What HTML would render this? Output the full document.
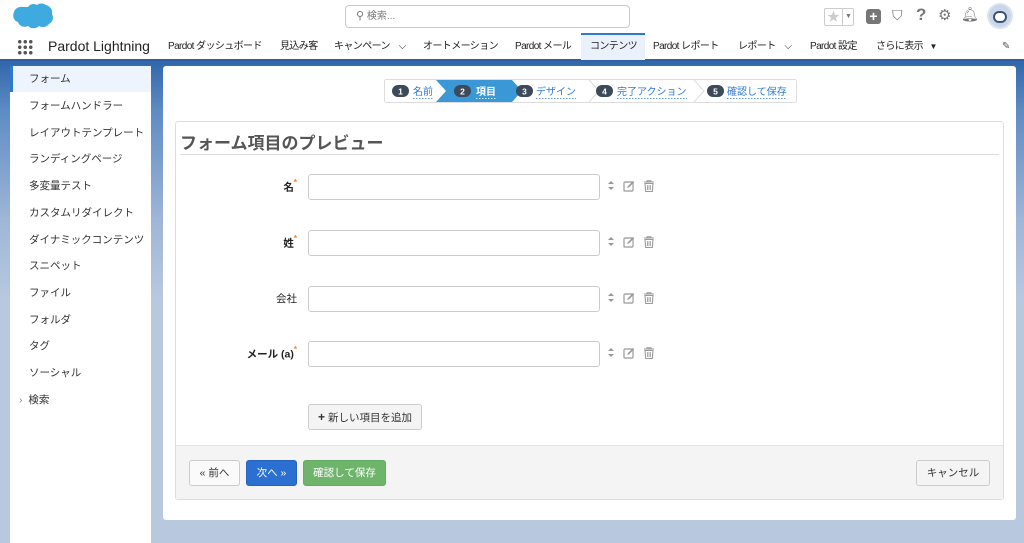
<!DOCTYPE html>
<html><head><meta charset="utf-8"><style>
*{box-sizing:border-box;margin:0;padding:0}
body{width:1024px;height:543px;overflow:hidden;font-family:"Liberation Sans","Noto Sans CJK JP",sans-serif;background:linear-gradient(#2f66ab 60px,#5d8bc3 110px,#9fb6d7 220px,#b8c8df 300px);position:relative;color:#333}
.abs{position:absolute}
#hdr{left:0;top:0;width:1024px;height:61px;background:#fff;border-bottom:2px solid #2f5f9e}
.nav{top:34px;height:26px;font-size:10px;letter-spacing:-0.6px;line-height:26px;color:#222;white-space:nowrap}
#side{left:10px;top:66px;width:141px;height:477px;background:#fff}
.si{position:absolute;left:0;width:141px;height:26px;line-height:26px;font-size:10.5px;padding-left:19px;color:#333}
#main{left:163px;top:66px;width:853px;height:454px;background:#fff;border-radius:3px}
.lbl{position:absolute;right:727px;font-size:10.5px;font-weight:bold;color:#222;text-align:right}
.lbl sup{color:#e8832b;font-size:8px;position:relative;top:-1px}
.inp{position:absolute;left:308px;width:292px;height:26px;border:1px solid #ccc;border-radius:3px;background:#fff}
.btn{position:absolute;height:26px;border-radius:3px;font-size:10.5px;line-height:24px;text-align:center;border:1px solid #ccc;background:#f4f4f4;color:#333}
</style></head><body>
<div id="hdr" class="abs">
 <svg class="abs" style="left:10px;top:3px" width="44" height="30" viewBox="0 0 44 30"><path d="M18 4c2-3 6-4 9-2 2-2 6-2 9 0 4 1 7 5 6 9 2 3 1 8-3 10-2 3-7 4-10 2-3 3-8 3-11 0-4 2-9 0-10-4-4-1-6-6-4-10 1-4 6-6 10-5z" fill="#1d9bd9" opacity=".85"/></svg>
 <div class="abs" style="left:345px;top:5px;width:285px;height:23px;border:1px solid #c9c9c9;border-radius:4px;font-size:10px;line-height:21px;color:#777;padding-left:10px"><span style="font-size:11px">&#9906;</span> 検索...</div>
 <div class="abs" style="left:824px;top:8px;width:30px;height:18px;border:1px solid #ccc;border-radius:2px;color:#ccc;font-size:13px;line-height:16px;padding-left:2px">★<span style="position:absolute;left:17px;top:0;width:12px;height:16px;border-left:1px solid #ccc;color:#777;font-size:7px;text-align:center">▼</span></div>
 <div class="abs" style="left:866px;top:9px;width:15px;height:15px;background:#777;border-radius:3px;color:#fff;font-size:14px;line-height:15px;text-align:center;font-weight:bold">+</div>
 <div class="abs" style="left:892px;top:7px;color:#777;font-size:14px">⛉</div>
 <div class="abs" style="left:916px;top:5px;color:#777;font-size:17px;font-weight:bold">?</div>
 <div class="abs" style="left:938px;top:6px;color:#777;font-size:15px">⚙</div>
 <div class="abs" style="left:961px;top:6px;color:#777;font-size:14px">🔔︎</div>
 <div class="abs" style="left:987px;top:3px;width:26px;height:26px;border-radius:50%;background:#c9d6e8;border:2px solid #dde4ee"><div style="margin:6px auto 0;width:14px;height:12px;background:#fff;border-radius:6px;border:2px solid #3a5478"></div></div>
 <div class="abs" style="left:17px;top:39px;width:16px;height:16px;background:radial-gradient(circle,#555 1.6px,transparent 2px) 0 0/5.5px 5.5px"></div>
 <div class="abs" style="left:48px;top:38px;font-size:14px;color:#222">Pardot Lightning</div>
 <div class="abs" style="left:581px;top:33px;width:64px;height:27px;background:#eaf1fb;border-top:2px solid #2f79d3"></div>
 <div class="abs nav" style="left:168px">Pardot ダッシュボード</div>
 <div class="abs nav" style="left:280px">見込み客</div>
 <div class="abs nav" style="left:334px">キャンペーン&nbsp;&nbsp;&nbsp;&nbsp;⌵</div>
 <div class="abs nav" style="left:423px">オートメーション</div>
 <div class="abs nav" style="left:515px">Pardot メール</div>
 <div class="abs nav" style="left:590px">コンテンツ</div>
 <div class="abs nav" style="left:653px">Pardot レポート</div>
 <div class="abs nav" style="left:738px">レポート&nbsp;&nbsp;&nbsp;&nbsp;⌵</div>
 <div class="abs nav" style="left:810px">Pardot 設定</div>
 <div class="abs nav" style="left:876px">さらに表示&nbsp;&nbsp;&nbsp;<span style="font-size:8px">▼</span></div>
 <div class="abs nav" style="left:1002px;color:#555">✎</div>
</div>
<div id="side" class="abs">
 <div class="si" style="top:0;background:#eef4fd;border-left:3px solid #2f79d3;padding-left:16px">フォーム</div>
 <div class="si" style="top:27px">フォームハンドラー</div>
 <div class="si" style="top:54px">レイアウトテンプレート</div>
 <div class="si" style="top:80px">ランディングページ</div>
 <div class="si" style="top:107px">多変量テスト</div>
 <div class="si" style="top:134px">カスタムリダイレクト</div>
 <div class="si" style="top:161px">ダイナミックコンテンツ</div>
 <div class="si" style="top:187px">スニペット</div>
 <div class="si" style="top:214px">ファイル</div>
 <div class="si" style="top:241px">フォルダ</div>
 <div class="si" style="top:267px">タグ</div>
 <div class="si" style="top:294px">ソーシャル</div>
 <div class="si" style="top:321px;padding-left:9px"><span style="color:#888">›</span>&nbsp; 検索</div>
</div>
<div id="main" class="abs"></div>
<svg class="abs" style="left:384px;top:79px" width="413" height="24" viewBox="0 0 413 24">
 <rect x=".5" y=".5" width="412" height="23" rx="2" fill="#fff" stroke="#ddd"/>
 <polygon points="52,1 128,1 138,12 128,23 52,23 62,12" fill="#3a98d6"/>
 <polyline points="205,1 215,12 205,23" fill="none" stroke="#ddd"/>
 <polyline points="310,1 320,12 310,23" fill="none" stroke="#ddd"/>
 <g font-size="10" font-family="Liberation Sans,Noto Sans CJK JP,sans-serif">
 <rect x="8" y="6" width="17" height="12" rx="6" fill="#3d4a5a"/><text x="16.5" y="15.5" fill="#fff" text-anchor="middle" font-size="8.5" font-weight="bold">1</text><text x="29" y="16" fill="#2f79d3">名前</text>
 <rect x="70" y="6" width="17" height="12" rx="6" fill="#3d4a5a"/><text x="78.5" y="15.5" fill="#fff" text-anchor="middle" font-size="8.5" font-weight="bold">2</text><text x="92" y="16" fill="#fff" font-weight="bold">項目</text>
 <rect x="132" y="6" width="17" height="12" rx="6" fill="#3d4a5a"/><text x="140.5" y="15.5" fill="#fff" text-anchor="middle" font-size="8.5" font-weight="bold">3</text><text x="152" y="16" fill="#2f79d3">デザイン</text>
 <rect x="212" y="6" width="17" height="12" rx="6" fill="#3d4a5a"/><text x="220.5" y="15.5" fill="#fff" text-anchor="middle" font-size="8.5" font-weight="bold">4</text><text x="233" y="16" fill="#2f79d3">完了アクション</text>
 <rect x="323" y="6" width="17" height="12" rx="6" fill="#3d4a5a"/><text x="331.5" y="15.5" fill="#fff" text-anchor="middle" font-size="8.5" font-weight="bold">5</text><text x="343" y="16" fill="#2f79d3">確認して保存</text>
 </g>
 <g stroke="#2f79d3" stroke-dasharray="1.5 1.5" stroke-width=".8"><line x1="29" y1="19.5" x2="49" y2="19.5"/><line x1="152" y1="19.5" x2="192" y2="19.5"/><line x1="233" y1="19.5" x2="303" y2="19.5"/><line x1="343" y1="19.5" x2="403" y2="19.5"/></g>
 <line x1="92" y1="19.5" x2="112" y2="19.5" stroke="#fff" stroke-dasharray="1.5 1.5" stroke-width=".8"/>
</svg>
<div class="abs" style="left:175px;top:121px;width:829px;height:379px;border:1px solid #ddd;border-radius:3px;background:#fff"></div>
<div class="abs" style="left:180px;top:129px;font-size:17px;font-weight:bold;color:#555">フォーム項目のプレビュー</div>
<div class="abs" style="left:180px;top:154px;width:819px;height:1px;background:#ddd"></div>
<div class="abs" style="left:176px;top:445px;width:827px;height:54px;background:#f4f4f4;border-top:1px solid #e4e4e4"></div>

<div class="lbl" style="top:179px">名<sup>*</sup></div>
<div class="lbl" style="top:235px">姓<sup>*</sup></div>
<div class="lbl" style="top:291px;font-weight:normal">会社</div>
<div class="lbl" style="top:346px">メール (a)<sup>*</sup></div>
<div class="inp" style="top:174px"></div>
<div class="inp" style="top:230px"></div>
<div class="inp" style="top:286px"></div>
<div class="inp" style="top:341px"></div>
<svg width="0" height="0" style="position:absolute"><defs><g id="ic"><path d="M3 3l3-3 3 3zM3 6l3 3 3-3z" fill="#999" transform="translate(0,1)"/><rect x="19" y="2" width="9" height="9" rx="1" fill="none" stroke="#999" stroke-width="1.2"/><path d="M22 8l1-2 5-5 1.2 1.2-5 5z" fill="#999"/><path d="M39 2h10M42 2v-1.2h4V2M40 3.5h8l-.7 8h-6.6z" fill="none" stroke="#999" stroke-width="1.1"/><path d="M42.5 5v5M44 5v5M45.5 5v5" stroke="#999" stroke-width=".8"/></g></defs></svg>
<svg class="abs" style="left:605px;top:180px" width="55" height="14"><use href="#ic"/></svg>
<svg class="abs" style="left:605px;top:236px" width="55" height="14"><use href="#ic"/></svg>
<svg class="abs" style="left:605px;top:292px" width="55" height="14"><use href="#ic"/></svg>
<svg class="abs" style="left:605px;top:347px" width="55" height="14"><use href="#ic"/></svg>

<div class="btn" style="left:308px;top:404px;width:114px"><b style="font-size:12px">+</b> 新しい項目を追加</div>
<div class="btn" style="left:189px;top:460px;width:51px;background:#fafafa">« 前へ</div>
<div class="btn" style="left:246px;top:460px;width:51px;background:#2b70d1;border-color:#2563c0;color:#fff">次へ »</div>
<div class="btn" style="left:303px;top:460px;width:83px;background:#6eb46b;border-color:#66ab63;color:#fff">確認して保存</div>
<div class="btn" style="left:916px;top:460px;width:74px">キャンセル</div>
</body></html>
